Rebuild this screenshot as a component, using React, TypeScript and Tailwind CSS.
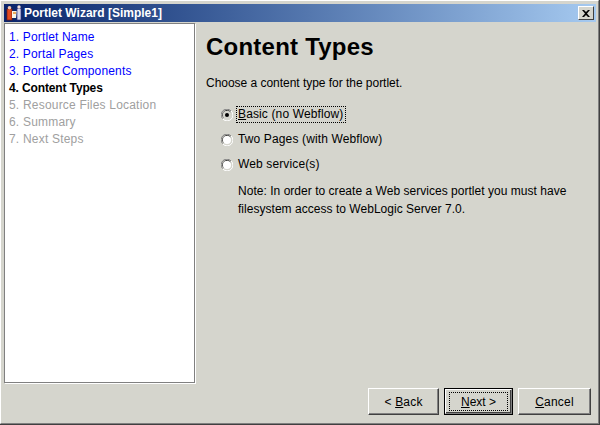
import type { ReactNode } from "react";

const steps = [
  { label: "1. Portlet Name", state: "done" },
  { label: "2. Portal Pages", state: "done" },
  { label: "3. Portlet Components", state: "done" },
  { label: "4. Content Types", state: "current" },
  { label: "5. Resource Files Location", state: "todo" },
  { label: "6. Summary", state: "todo" },
  { label: "7. Next Steps", state: "todo" },
];

function Radio({ checked }: { checked?: boolean }) {
  return (
    <svg width="12" height="12" viewBox="0 0 12 12" className="shrink-0">
      <path d="M10 2A5.600 5.600 0 0 0 1.600 9.600" fill="none" stroke="#808080" />
      <path d="M9.400 3A4.400 4.400 0 0 0 2.600 8.600" fill="none" stroke="#404040" />
      <path d="M2 10.200A5.600 5.600 0 0 0 10.200 2" fill="none" stroke="#ffffff" />
      <circle cx="6" cy="6" r="4" fill={checked ? "#d5d5cd" : "#ffffff"} />
      {checked && <circle cx="6" cy="6" r="2" fill="#000000" />}
    </svg>
  );
}

function WizardButton({ children, primary, width }: { children: ReactNode; primary?: boolean; width?: string }) {
  if (primary) {
    return (
      <div className="w-[69px] h-[27px] border border-black">
        <div className="w-full h-full border border-[#808080] border-t-white border-l-white shadow-[inset_-1px_-1px_0_#404040] flex items-center justify-center">
          <div className="w-[59px] h-[19px] pt-[1px] border border-dotted border-black flex items-center justify-center">
            {children}
          </div>
        </div>
      </div>
    );
  }
  return (
    <div
      className={`${width} h-[27px] pt-[1px] border border-t-white border-l-white border-r-[#404040] border-b-[#404040] shadow-[inset_-1px_-1px_0_#808080] flex items-center justify-center`}
    >
      {children}
    </div>
  );
}

function Option({ label, checked, focused }: { label: ReactNode; checked?: boolean; focused?: boolean }) {
  return (
    <div className="flex items-center h-[17px] gap-[4px]">
      <Radio checked={checked} />
      <span
        className={
          focused
            ? "px-[1px] tracking-[0.13px] outline-1 outline-dotted outline-black leading-[15px]"
            : "px-[1px] tracking-[0.13px] leading-[15px]"
        }
      >
        {label}
      </span>
    </div>
  );
}

export default function App() {
  return (
    <div className="w-[600px] h-[425px] overflow-hidden bg-[#d5d5cd] text-black text-[12px] font-['Liberation_Sans',Arial,sans-serif] border-r border-b border-[#404040]">
      <div className="h-full border-t border-l border-r border-b border-t-white border-l-white border-r-[#808080] border-b-[#808080] pt-[3px] pl-[3px] pr-[2px] flex flex-col">
        {/* Title bar */}
        <div className="h-[18px] shrink-0 flex items-center bg-gradient-to-r from-[#0a246a] to-[#a6caf0] pl-[2px] pr-[2px]">
          <svg width="16" height="16" viewBox="0 0 16 16" className="shrink-0">
            <rect x="1" y="4" width="5" height="11" fill="#e04a20" stroke="#7a1a10" strokeWidth="0.7" />
            <circle cx="3.500" cy="2.800" r="1.800" fill="#f2c8b0" />
            <path d="M6 6h5l-1 7H6z" fill="#f8f4e8" />
            <path d="M7 8h3" stroke="#e89030" strokeWidth="1.500" />
            <rect x="11" y="3.500" width="4" height="11.500" fill="#d8d8f0" stroke="#30307a" strokeWidth="0.7" />
            <circle cx="13" cy="2" r="1.700" fill="#f4e0d8" />
          </svg>
          <span className="ml-[2px] text-white font-bold text-[12px] whitespace-nowrap">
            Portlet Wizard [Simple1]
          </span>
          <div className="ml-auto w-[16px] h-[14px] bg-[#d5d5cd] border border-t-white border-l-white border-r-[#404040] border-b-[#404040] flex items-center justify-center">
            <svg width="8" height="7" viewBox="0 0 8 7">
              <path d="M0 0h2l2 2 2-2h2L5 3.500 8 7H6L4 5 2 7H0l3-3.500z" fill="#000" />
            </svg>
          </div>
        </div>

        <div className="flex flex-1 min-h-0 pt-[1px]">
          {/* Step list */}
          <div className="w-[191px] h-[360px] shrink-0 bg-white border border-[#808080] shadow-[1px_1px_0_#ffffff] pt-[5px] pl-[4px] text-[12px] leading-[17px]">
            {steps.map((s) => (
              <div
                key={s.label}
                className={
                  s.state === "done"
                    ? "text-[#0000ff] tracking-[0.15px]"
                    : s.state === "current"
                      ? "font-bold text-black tracking-[-0.13px]"
                      : "text-[#a0a0a0] tracking-[0.2px]"
                }
              >
                {s.label}
              </div>
            ))}
          </div>

          {/* Main panel */}
          <div className="flex-1 pl-[11px]">
            <h1 className="text-[24px] font-bold leading-[28px] mt-[10px] tracking-[0.23px] whitespace-nowrap">
              Content Types
            </h1>
            <p className="mt-[15px] leading-[15px] tracking-[-0.03px]">Choose a content type for the portlet.</p>
            <div className="mt-[15px] ml-[15px] flex flex-col gap-[8px]">
              <Option
                checked
                focused
                label={
                  <>
                    <span className="underline">B</span>asic (no Webflow)
                  </>
                }
              />
              <Option label="Two Pages (with Webflow)" />
              <Option label="Web service(s)" />
            </div>
            <p className="mt-[9px] ml-[32px] w-[350px] leading-[18px] tracking-[0.03px]">
              Note: In order to create a Web services portlet you must have filesystem access to WebLogic Server 7.0.
            </p>
          </div>
        </div>

        {/* Button row */}
        <div className="flex justify-end items-center h-[27px] mb-[8px] pr-[5px]">
          <WizardButton width="w-[71px]">
            <span className="tracking-[0.2px]">
              &lt; <span className="underline">B</span>ack
            </span>
          </WizardButton>
          <div className="w-[5px]" />
          <WizardButton primary>
            <span>
              <span className="underline">N</span>ext &gt;
            </span>
          </WizardButton>
          <div className="w-[5px]" />
          <WizardButton width="w-[73px]">
            <span className="tracking-[0.2px]">
              <span className="underline">C</span>ancel
            </span>
          </WizardButton>
        </div>
      </div>
    </div>
  );
}
